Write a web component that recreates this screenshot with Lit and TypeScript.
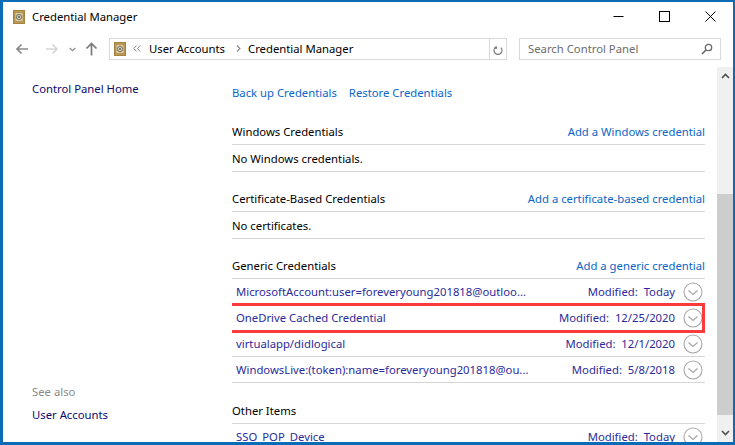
import { LitElement, css, html, svg } from 'lit';
import { customElement } from 'lit/decorators.js';

const safeIcon = () => html`
	<svg width="12" height="14" viewBox="0 0 12 14">
		<rect x="0.5" y="0.5" width="11" height="13" fill="#c19a50" stroke="#a5823f"/>
		<rect x="2" y="2.5" width="8" height="9" fill="#dcc998" stroke="#8f7a4e" stroke-width="0.5"/>
		<circle cx="6" cy="7" r="2.7" fill="#c8c4b6" stroke="#6f6a5c" stroke-width="0.8"/>
		<circle cx="6" cy="7" r="0.9" fill="#5f5a4c"/>
	</svg>`;

const chevronCircle = svg`
	<circle cx="10" cy="10" r="9" fill="#fff" stroke="#a8a8a8" stroke-width="1.1"/>
	<path d="M5.5 8.5 L10 12.5 L14.5 8.5" fill="none" stroke="#a8a8a8" stroke-width="1.2"/>`;

type Row = { name: string; date: string };

const genericRows: Row[] = [
	{ name: 'MicrosoftAccount:user=foreveryoung201818@outloo...', date: 'Today' },
	{ name: 'OneDrive Cached Credential', date: '12/25/2020' },
	{ name: 'virtualapp/didlogical', date: '12/1/2020' },
	{ name: 'WindowsLive:(token):name=foreveryoung201818@ou...', date: '5/8/2018' },
];

@customElement('app-root')
export class AppRoot extends LitElement {
	static styles = css`
		:host {
			display: block;
			width: 735px;
			height: 445px;
			overflow: hidden;
			font-family: 'Noto Sans', 'Open Sans', sans-serif;
			font-size: 11.3px;
			color: #000;
		}
		.window {
			box-sizing: border-box;
			width: 735px;
			height: 445px;
			background: #fff;
			border: solid #0b6cb5;
			border-width: 2px 2px 3px 3px;
			display: flex;
			flex-direction: column;
			overflow: hidden;
		}
		.titlebar {
			height: 30px;
			flex: none;
			display: flex;
			align-items: center;
			padding-left: 10px;
			gap: 7px;
		}
		.titlebar .title {
			flex: 1;
			margin-top: -2px;
		}
		.caption {
			display: flex;
			align-items: center;
			margin-top: -1px;
		}
		.caption span {
			width: 46px;
			height: 30px;
			display: flex;
			align-items: center;
			justify-content: center;
		}
		.navbar {
			height: 24px;
			flex: none;
			margin-top: 5px;
			display: flex;
			align-items: center;
		}
		.nav-buttons {
			width: 106px;
			padding-left: 12px;
			box-sizing: border-box;
			display: flex;
			align-items: center;
			flex: none;
		}
		.fwd {
			margin-left: 16px;
		}
		.recent {
			margin-left: 10px;
		}
		.up {
			margin-left: 9px;
		}
		.address {
			width: 381px;
			height: 22px;
			box-sizing: border-box;
			border: 1px solid #d9d9d9;
			display: flex;
			align-items: center;
			padding-left: 4px;
			flex: none;
		}
		.address .crumbs {
			display: flex;
			align-items: center;
			flex: 1;
			margin-left: 7px;
			padding-bottom: 1px;
		}
		.crumb-first {
			margin-left: 8px;
		}
		.crumb-sep {
			margin-left: 11px;
		}
		.crumb-last {
			margin-left: 7px;
		}
		.refresh {
			width: 17px;
			height: 22px;
			box-sizing: border-box;
			border: 1px solid #d9d9d9;
			border-left-width: 0;
			display: flex;
			align-items: center;
			justify-content: center;
			flex: none;
		}
		.search {
			width: 202px;
			height: 22px;
			box-sizing: border-box;
			margin-left: 12px;
			border: 1px solid #d9d9d9;
			display: flex;
			align-items: center;
			justify-content: space-between;
			padding: 0 7px 1px 8px;
			color: #6d6d6d;
			flex: none;
		}
		.body {
			flex: 1;
			min-height: 0;
			display: flex;
			margin-top: 6px;
		}
		.sidebar {
			width: 229px;
			flex: none;
			box-sizing: border-box;
			padding: 14px 0 20px 29px;
			display: flex;
			flex-direction: column;
			justify-content: space-between;
		}
		.sidebar a {
			color: #0b0b6e;
			display: block;
		}
		.see-also {
			color: #8a8a8a;
			margin-bottom: 8px;
		}
		.main {
			width: 473px;
			flex: none;
			padding-top: 18px;
			overflow: hidden;
		}
		.tasks {
			display: flex;
			gap: 12px;
			color: #0a66c8;
			height: 16px;
			line-height: 16px;
			margin-bottom: 22px;
		}
		.section {
			margin-bottom: 18px;
		}
		.section.generic {
			margin-bottom: 19px;
		}
		.section.last {
			margin-bottom: 0;
		}
		.head {
			display: flex;
			justify-content: space-between;
			height: 22px;
			line-height: 18px;
			border-bottom: 1px solid #d6d6d6;
			box-sizing: border-box;
		}
		.head a {
			color: #0a66c8;
		}
		.empty {
			height: 27px;
			line-height: 27px;
			border-bottom: 1px solid #d6d6d6;
			box-sizing: border-box;
		}
		.row {
			position: relative;
			height: 26px;
			box-sizing: border-box;
			border-bottom: 1px solid #d6d6d6;
			display: flex;
			align-items: center;
			padding-left: 4px;
			padding-right: 2px;
			color: #2b2b9b;
		}
		.row .name {
			flex: 1;
			white-space: nowrap;
		}
		.row .mod {
			white-space: pre;
			margin-right: 8px;
		}
		.row svg {
			flex: none;
			margin-top: 1px;
		}
		.row.marked::after {
			content: '';
			position: absolute;
			left: -4px;
			right: 0;
			top: -2px;
			bottom: -3px;
			border: 3px solid #fb3a3e;
		}
		.scrollbar {
			width: 16px;
			margin-left: 12px;
			flex: none;
			background: #f0f0f0;
			display: flex;
			flex-direction: column;
		}
		.scrollbar .arrow {
			height: 18px;
			flex: none;
			display: flex;
			align-items: center;
			justify-content: center;
		}
		.scrollbar .arrow.down {
			height: 27px;
			align-items: flex-end;
			padding-bottom: 6px;
			box-sizing: border-box;
		}
		.track {
			flex: 1;
			display: flex;
			flex-direction: column;
		}
		.track .gap {
			height: 109px;
			flex: none;
		}
		.track .thumb {
			flex: 1;
			background: #cdcdcd;
		}
	`;

	renderRow(r: Row) {
		return html`
			<div class="row ${r.date === '12/25/2020' ? 'marked' : ''}">
				<span class="name">${r.name}</span>
				<span class="mod">Modified:  ${r.date}</span>
				<svg width="20" height="20" viewBox="0 0 20 20">${chevronCircle}</svg>
			</div>`;
	}

	render() {
		return html`
		<div class="window">
			<div class="titlebar">
				${safeIcon()}
				<span class="title">Credential Manager</span>
				<div class="caption">
					<span><svg width="11" height="11"><path d="M0.5 5.5h10" stroke="#000"/></svg></span>
					<span><svg width="11" height="11"><rect x="0.5" y="0.5" width="10" height="10" fill="none" stroke="#000"/></svg></span>
					<span><svg width="11" height="11"><path d="M0.5 0.5l10 10M10.5 0.5l-10 10" stroke="#000" fill="none"/></svg></span>
				</div>
			</div>

			<div class="navbar">
				<div class="nav-buttons">
					<svg width="14" height="12" viewBox="0 0 14 12"><path d="M13 6H2M6.5 1.5L2 6l4.5 4.5" fill="none" stroke="#8a8a8a" stroke-width="1.7"/></svg>
					<svg class="fwd" width="14" height="12" viewBox="0 0 14 12"><path d="M1 6h11M7.5 1.5L12 6l-4.5 4.5" fill="none" stroke="#d6d6d6" stroke-width="1.7"/></svg>
					<svg class="recent" width="7" height="5" viewBox="0 0 7 5"><path d="M0.7 1l2.8 2.6L6.3 1" fill="none" stroke="#8a8a8a" stroke-width="1.2"/></svg>
					<svg class="up" width="13" height="14" viewBox="0 0 13 14"><path d="M6.5 13.5V2M1.5 6.5l5-5 5 5" fill="none" stroke="#7a7a7a" stroke-width="1.7"/></svg>
				</div>
				<div class="address">
					${safeIcon()}
					<div class="crumbs">
						<svg width="8" height="7" viewBox="0 0 8 7"><path d="M3.5 0.5L0.8 3.5l2.7 3M7.2 0.5L4.5 3.5l2.7 3" fill="none" stroke="#8a8a8a"/></svg>
						<span class="crumb-first">User Accounts</span>
						<svg class="crumb-sep" width="5" height="7" viewBox="0 0 5 7"><path d="M1 0.5l3 3-3 3" fill="none" stroke="#8a8a8a" stroke-width="1.1"/></svg>
						<span class="crumb-last">Credential Manager</span>
					</div>
				</div>
				<div class="refresh">
					<svg width="10" height="11" viewBox="0 0 10 11"><path d="M2.2 2.6A4 4 0 1 0 7.8 2.6M1.2 2.8h3M3 1v3" transform="translate(0 1)" fill="none" stroke="#7a7a7a" stroke-width="1.2"/></svg>
				</div>
				<div class="search">
					<span>Search Control Panel</span>
					<svg width="12" height="12" viewBox="0 0 12 12"><circle cx="7.5" cy="4.5" r="3.2" fill="none" stroke="#6a6a6a" stroke-width="1.3"/><path d="M5 7L1 11" stroke="#6a6a6a" stroke-width="1.7"/></svg>
				</div>
			</div>

			<div class="body">
				<div class="sidebar">
					<a>Control Panel Home</a>
					<div>
						<div class="see-also">See also</div>
						<a>User Accounts</a>
					</div>
				</div>
				<div class="main">
					<div class="tasks"><a>Back up Credentials</a><a>Restore Credentials</a></div>
					<div class="section">
						<div class="head"><span>Windows Credentials</span><a>Add a Windows credential</a></div>
						<div class="empty">No Windows credentials.</div>
					</div>
					<div class="section">
						<div class="head"><span>Certificate-Based Credentials</span><a>Add a certificate-based credential</a></div>
						<div class="empty">No certificates.</div>
					</div>
					<div class="section generic">
						<div class="head"><span>Generic Credentials</span><a>Add a generic credential</a></div>
						${genericRows.map((r) => this.renderRow(r))}
					</div>
					<div class="section last">
						<div class="head"><span>Other Items</span></div>
						${this.renderRow({ name: 'SSO_POP_Device', date: 'Today' })}
					</div>
				</div>
				<div class="scrollbar">
					<div class="arrow"><svg width="9" height="6" viewBox="0 0 9 6"><path d="M1 5l3.5-3.5L8 5" fill="none" stroke="#505050" stroke-width="1.6"/></svg></div>
					<div class="track"><div class="gap"></div><div class="thumb"></div></div>
					<div class="arrow down"><svg width="9" height="6" viewBox="0 0 9 6"><path d="M1 1l3.5 3.5L8 1" fill="none" stroke="#505050" stroke-width="1.6"/></svg></div>
				</div>
			</div>
		</div>
		`;
	}
}
